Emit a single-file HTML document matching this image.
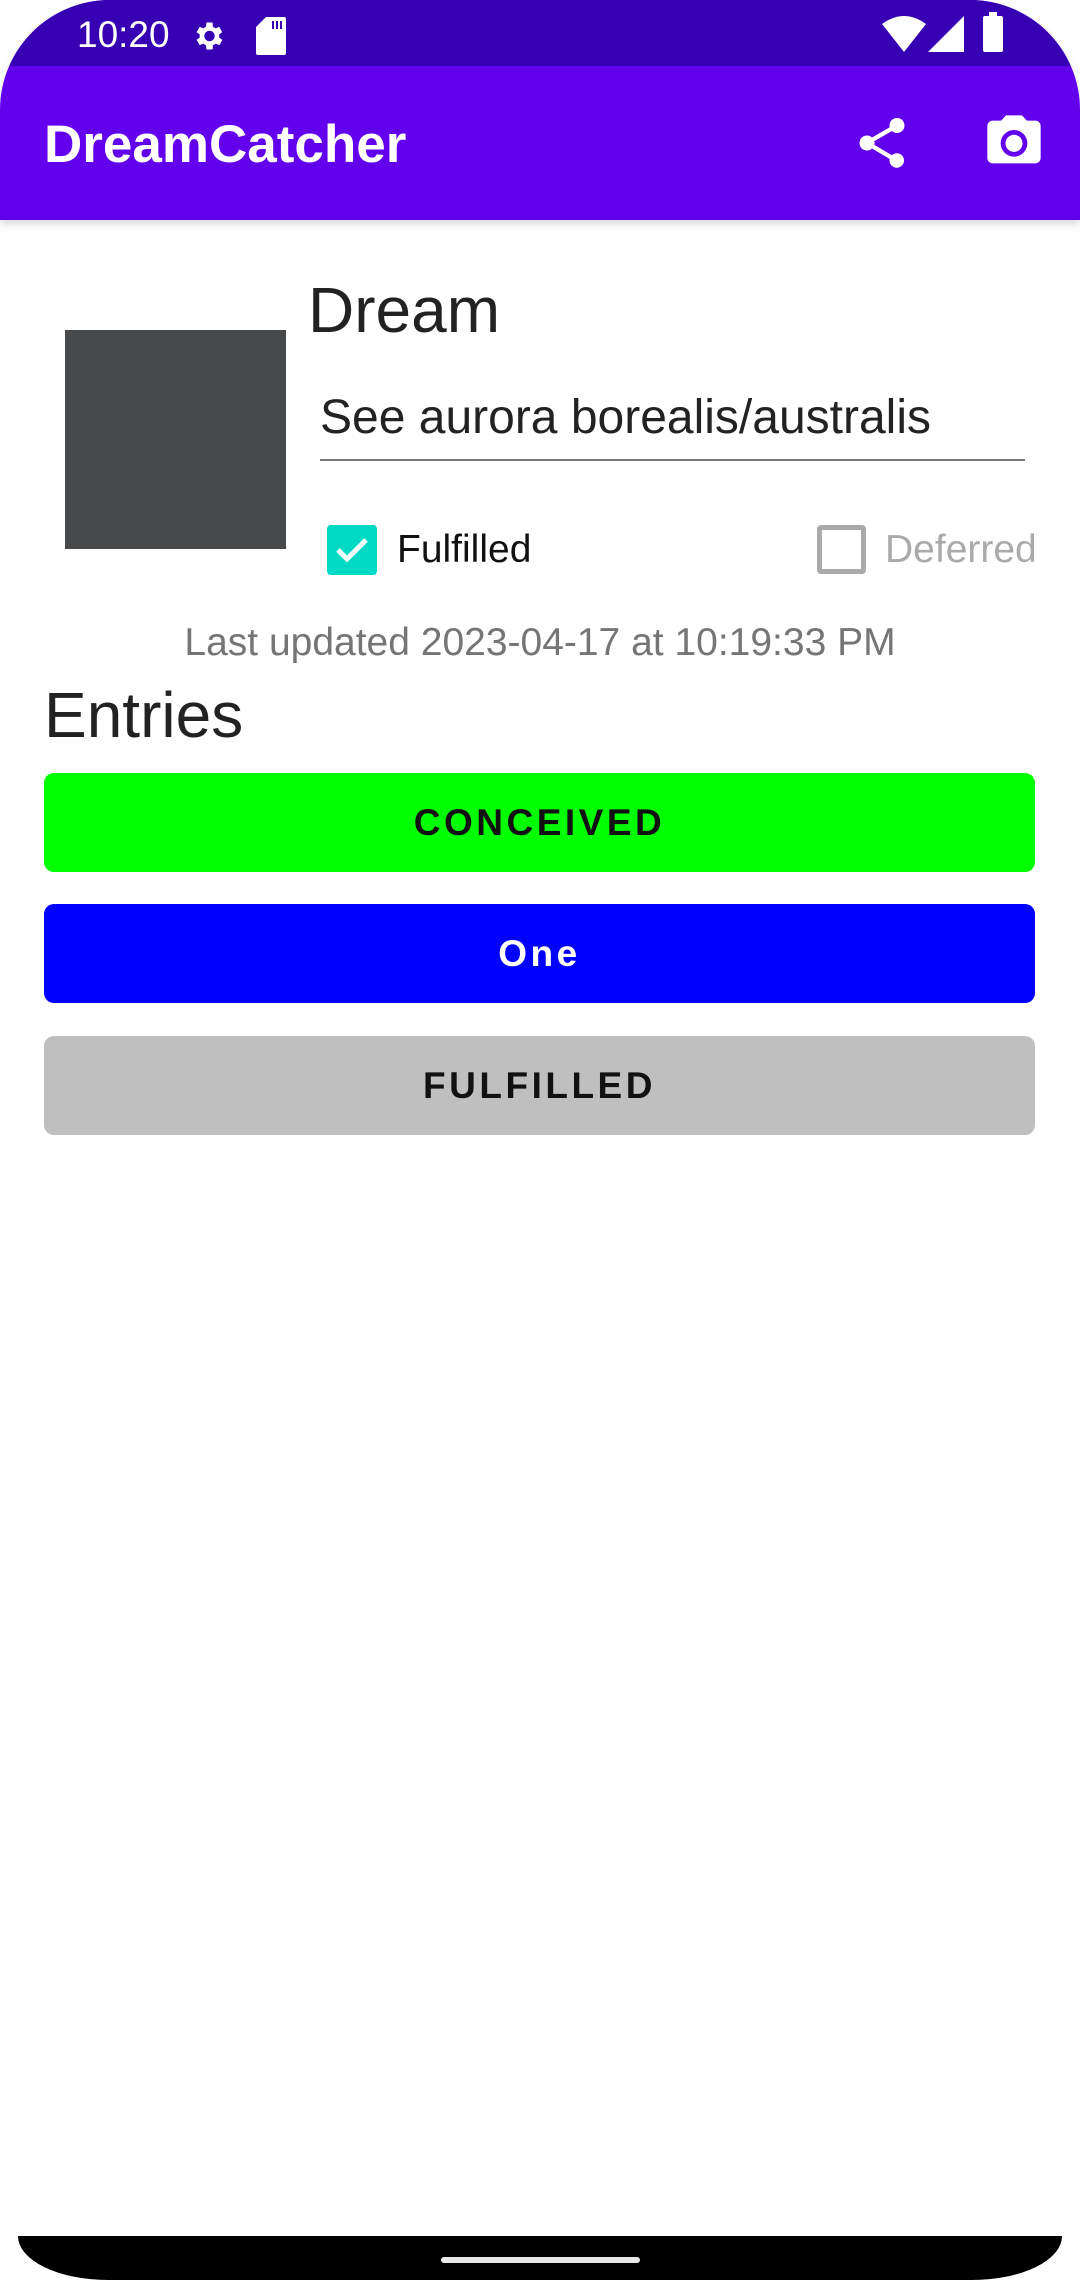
<!DOCTYPE html>
<html><head><meta charset="utf-8"><style>
*{margin:0;padding:0;box-sizing:border-box}
body{width:1080px;height:2280px;background:#fff;position:relative;overflow:hidden;font-family:"Liberation Sans",Roboto,sans-serif}
.abs{position:absolute}
#top{left:0;top:0;width:1080px;height:220px;border-radius:110px 110px 0 0;overflow:hidden;background:#6200EE;box-shadow:0 4px 8px rgba(0,0,0,.15)}
#sb{left:0;top:0;width:1080px;height:66px;background:#3700B3}
.btn{left:44px;width:991px;height:99px;border-radius:10px;text-align:center;line-height:99px;font-size:37px;font-weight:bold;letter-spacing:3.5px}
</style></head><body>
<div id="top" class="abs">
<div id="sb" class="abs"></div>
<div class="abs" style="left:77px;top:14px;color:#fff;font-size:37px">10:20</div>
<svg class="abs" style="left:190px;top:18px" width="36" height="36" viewBox="0 0 24 24"><path fill="#fff" d="M19.4 13a7.5 7.5 0 000-2l2.1-1.6-2-3.5-2.5 1a7 7 0 00-1.7-1L15 3h-4l-.4 2.9a7 7 0 00-1.7 1l-2.5-1-2 3.5L6.5 11a7.5 7.5 0 000 2l-2.1 1.6 2 3.5 2.5-1a7 7 0 001.7 1L11 21h4l.4-2.9a7 7 0 001.7-1l2.5 1 2-3.5zM13 15.5a3.5 3.5 0 110-7 3.5 3.5 0 010 7z"/></svg>
<svg class="abs" style="left:256px;top:17px" width="30" height="38" viewBox="0 0 15 19"><path fill="#fff" d="M5 0h9a1 1 0 011 1v17a1 1 0 01-1 1H1a1 1 0 01-1-1V5zM8 2v4h1V2zm2 0v4h1V2zm2 0v4h1V2z"/></svg>
<svg class="abs" style="left:882px;top:16px" width="44" height="36" viewBox="0 0 22 18"><path fill="#fff" d="M0 4Q11-4 22 4L11 18z"/></svg>
<svg class="abs" style="left:928px;top:16px" width="36" height="36" viewBox="0 0 18 18"><path fill="#fff" d="M18 0V18H0z"/></svg>
<div class="abs" style="left:983px;top:16px;width:20px;height:36px;background:#fff;border-radius:2px"></div>
<div class="abs" style="left:989px;top:12px;width:8px;height:5px;background:#fff"></div>
<div class="abs" style="left:44px;top:112px;color:#fff;font-size:53px;font-weight:bold;line-height:66px">DreamCatcher</div>
<svg class="abs" style="left:852px;top:113px" width="60" height="60" viewBox="0 0 24 24"><path fill="#fff" d="M18 16.1c-.8 0-1.5.3-2 .8l-7.1-4.2c.1-.2.1-.5.1-.7s0-.5-.1-.7L16 7.2c.5.5 1.2.8 2 .8 1.7 0 3-1.3 3-3s-1.3-3-3-3-3 1.3-3 3c0 .2 0 .5.1.7L8 9.8C7.5 9.3 6.8 9 6 9c-1.7 0-3 1.3-3 3s1.3 3 3 3c.8 0 1.5-.3 2-.8l7.1 4.2c-.1.2-.1.4-.1.6 0 1.6 1.3 2.9 2.9 2.9s2.9-1.3 2.9-2.9-1.2-2.9-2.8-2.9z"/></svg>
<svg class="abs" style="left:982px;top:110px" width="64" height="64" viewBox="0 0 24 24"><circle cx="12" cy="12.5" r="3.2" fill="#fff"/><path fill="#fff" d="M9 2L7.2 4H4a2 2 0 00-2 2v12a2 2 0 002 2h16a2 2 0 002-2V6a2 2 0 00-2-2h-3.2L15 2zm3 15.5a5 5 0 110-10 5 5 0 010 10z"/></svg>
</div>
<div class="abs" style="left:65px;top:330px;width:221px;height:219px;background:#48494b"></div>
<div class="abs" style="left:308px;top:270px;font-size:64px;color:#222;line-height:80px">Dream</div>
<div class="abs" style="left:320px;top:388px;font-size:48px;color:#222;line-height:60px">See aurora borealis/australis</div>
<div class="abs" style="left:320px;top:459px;width:705px;height:2px;background:#777"></div>
<div class="abs" style="left:327px;top:525px;width:50px;height:50px;background:#03DAC5;border-radius:4px"></div>
<svg class="abs" style="left:327px;top:525px" width="50" height="50" viewBox="0 0 50 50"><path d="M11 25l9 9 19-19" stroke="#fff" stroke-width="5" fill="none"/></svg>
<div class="abs" style="left:397px;top:527px;font-size:39px;color:#111;line-height:46px">Fulfilled</div>
<div class="abs" style="left:817px;top:525px;width:49px;height:49px;border:5px solid #aaa;border-radius:4px"></div>
<div class="abs" style="left:885px;top:527px;font-size:39px;color:#aaa;line-height:46px">Deferred</div>
<div class="abs" style="left:0;top:620px;width:1080px;text-align:center;font-size:39px;color:#757575;line-height:46px">Last updated 2023-04-17 at 10:19:33 PM</div>
<div class="abs" style="left:44px;top:675px;font-size:64px;color:#222;line-height:80px">Entries</div>
<div class="abs btn" style="top:773px;background:#00ff00;color:#111">CONCEIVED</div>
<div class="abs btn" style="top:904px;background:#0000ff;color:#fff">One</div>
<div class="abs btn" style="top:1036px;background:#bfbfbf;color:#111">FULFILLED</div>
<div class="abs" style="left:18px;top:2236px;width:1044px;height:44px;background:#000;border-radius:0 0 90px 90px/0 0 44px 44px"></div>
<div class="abs" style="left:441px;top:2257px;width:199px;height:6px;background:#e8e8e8;border-radius:3px"></div>
</body></html>
